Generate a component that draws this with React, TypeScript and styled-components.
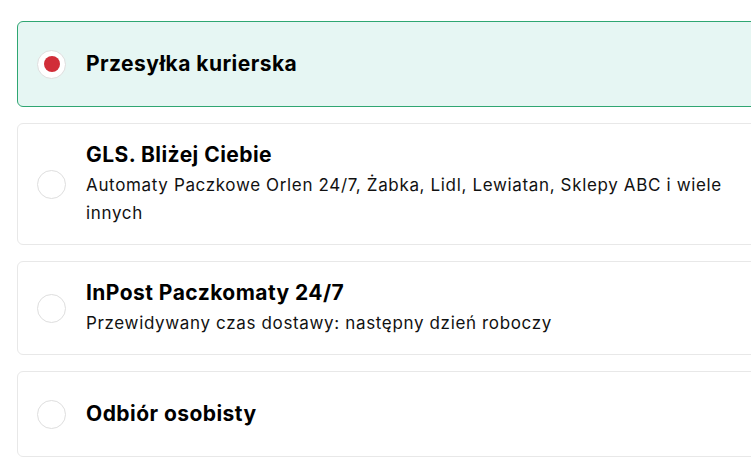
import React from "react";
import styled, { createGlobalStyle } from "styled-components";

const GlobalStyle = createGlobalStyle`
  html, body {
    margin: 0;
    padding: 0;
    background: #ffffff;
    overflow: hidden;
  }
  body {
    font-family: "Inter", "Open Sans", sans-serif;
    color: #000;
  }
  * { box-sizing: border-box; }
`;

const List = styled.div`
  display: flex;
  flex-direction: column;
  gap: 16px;
  padding: 21px 0 0 17px;
  width: 820px;
`;

const Card = styled.label<{ $selected?: boolean }>`
  display: flex;
  align-items: center;
  gap: 20px;
  min-height: 86px;
  padding: 17px 18px 17px 19px;
  border: 1px solid ${(p) => (p.$selected ? "#2fa672" : "#e8e8e8")};
  background: ${(p) => (p.$selected ? "#e6f6f3" : "#ffffff")};
  border-radius: 6px;
  cursor: pointer;
`;

const Radio = styled.span<{ $checked?: boolean }>`
  flex: 0 0 auto;
  width: 29px;
  height: 29px;
  border-radius: 50%;
  border: 1px solid #dedede;
  background: #ffffff;
  display: flex;
  align-items: center;
  justify-content: center;

  &::after {
    content: "";
    display: ${(p) => (p.$checked ? "block" : "none")};
    width: 16px;
    height: 16px;
    border-radius: 50%;
    background: #d12d38;
  }
`;

const Texts = styled.div`
  display: flex;
  flex-direction: column;
  gap: 2px;
  width: 664px;
`;

const Title = styled.div`
  font-size: 21px;
  line-height: 28px;
  font-weight: 700;
  letter-spacing: 0.45px;
`;

const Desc = styled.div`
  font-size: 17px;
  line-height: 28px;
  font-weight: 400;
  letter-spacing: 0.65px;
  color: #111;
`;

type Option = { title: string; desc?: string; selected?: boolean };

const options: Option[] = [
  { title: "Przesyłka kurierska", selected: true },
  {
    title: "GLS. Bliżej Ciebie",
    desc: "Automaty Paczkowe Orlen 24/7, Żabka, Lidl, Lewiatan, Sklepy ABC i wiele innych",
  },
  {
    title: "InPost Paczkomaty 24/7",
    desc: "Przewidywany czas dostawy: następny dzień roboczy",
  },
  { title: "Odbiór osobisty" },
];

export default function App() {
  return (
    <>
      <GlobalStyle />
      <List>
        {options.map((o) => (
          <Card key={o.title} $selected={o.selected}>
            <Radio $checked={o.selected} />
            <Texts>
              <Title>{o.title}</Title>
              {o.desc && <Desc>{o.desc}</Desc>}
            </Texts>
          </Card>
        ))}
      </List>
    </>
  );
}
